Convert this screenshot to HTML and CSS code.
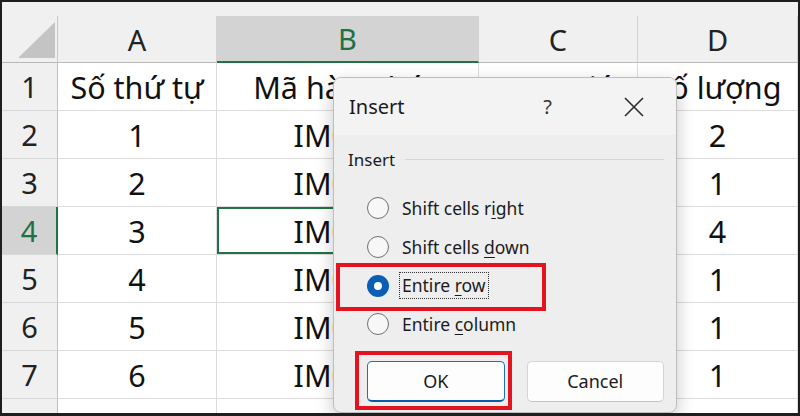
FILE: index.html
```html
<!DOCTYPE html>
<html lang="vi">
<head>
<meta charset="utf-8">
<link rel="stylesheet" href="styles.css">
</head>
<body>
<div class="frame">
  <div class="sheet">
    <div class="strip"></div>
    <div class="corner"><svg width="56" height="47" viewBox="0 0 56 47"><polygon points="53,6 53,42 16,42" fill="#c4c4c4"/></svg></div>
    <div class="colhead">A</div>
    <div class="colhead sel">B</div>
    <div class="colhead">C</div>
    <div class="colhead">D</div>

    <div class="rowhead">1</div><div class="cell">Số thứ tự</div><div class="cell">Mã hàng hóa</div><div class="cell">Đơn giá</div><div class="cell">Số lượng</div>
    <div class="rowhead">2</div><div class="cell">1</div><div class="cell">IM0001</div><div class="cell">150000</div><div class="cell">2</div>
    <div class="rowhead">3</div><div class="cell">2</div><div class="cell">IM0002</div><div class="cell">200000</div><div class="cell">1</div>
    <div class="rowhead sel">4</div><div class="cell">3</div><div class="cell active">IM0003</div><div class="cell">120000</div><div class="cell">4</div>
    <div class="rowhead">5</div><div class="cell">4</div><div class="cell">IM0004</div><div class="cell">300000</div><div class="cell">1</div>
    <div class="rowhead">6</div><div class="cell">5</div><div class="cell">IM0005</div><div class="cell">250000</div><div class="cell">1</div>
    <div class="rowhead">7</div><div class="cell">6</div><div class="cell">IM0006</div><div class="cell">180000</div><div class="cell">1</div>
    <div class="rowhead">8</div><div class="cell">7</div><div class="cell">IM0007</div><div class="cell">90000</div><div class="cell">3</div>
  </div>

  <div class="dialog">
    <div class="titlebar">
      <span class="title">Insert</span>
      <span class="help">?</span>
      <svg class="close" width="20" height="20" viewBox="0 0 20 20"><path d="M1 1 L19 19 M19 1 L1 19" stroke="#2b2b2b" stroke-width="1.6" fill="none"/></svg>
    </div>
    <div class="body">
      <div class="legend"><span>Insert</span><span class="rule"></span></div>
      <div class="options">
        <div class="opt"><span class="radio"></span><span class="lbl">Shift cells r<u>i</u>ght</span></div>
        <div class="opt"><span class="radio"></span><span class="lbl">Shift cells <u>d</u>own</span></div>
        <div class="opt"><span class="radio on"></span><span class="lbl focus">Entire <u>r</u>ow</span></div>
        <div class="opt"><span class="radio"></span><span class="lbl">Entire <u>c</u>olumn</span></div>
      </div>
      <div class="buttons">
        <div class="btn primary">OK</div>
        <div class="btn">Cancel</div>
      </div>
    </div>
  </div>

  <div class="mark mark-row"></div>
  <div class="mark mark-ok"></div>
</div>
</body>
</html>
```
FILE: styles.css
```css
* { box-sizing: border-box; }
html, body { margin: 0; padding: 0; background: #fff; }
body { font-family: "Noto Sans", "Open Sans", sans-serif; }

.frame {
  position: relative;
  width: 800px;
  height: 416px;
  border: 2px solid #1e1e1e;
  border-bottom-width: 3px;
  overflow: hidden;
  background: #fff;
}

.sheet {
  display: grid;
  grid-template-columns: 56px 159px 262px 159px 1fr;
  grid-template-rows: 14px 47px repeat(8, 48px);
  font-size: 30.5px;
  color: #111;
}

.strip { grid-column: 1 / -1; background: #f0f0f0; }

.corner {
  background: #f0f0f0;
  border-right: 1px solid #c8c8c8;
  border-bottom: 1px solid #b9b9b9;
}
.corner svg { display: block; }

.colhead {
  display: flex;
  align-items: center;
  justify-content: center;
  background: #f0f0f0;
  border-right: 1px solid #d2d2d2;
  border-bottom: 1px solid #b9b9b9;
  color: #222;
  font-size: 29px;
}
.colhead.sel {
  background: #d3d3d3;
  color: #1e7145;
  border-bottom: 2px solid #217346;
}

.rowhead {
  display: flex;
  align-items: center;
  justify-content: center;
  background: #f0f0f0;
  border-right: 1px solid #c0c0c0;
  border-bottom: 1px solid #d8d8d8;
  color: #222;
  font-size: 29px;
}
.rowhead.sel {
  background: #d3d3d3;
  color: #1e7145;
  border-right: 2px solid #217346;
}

.cell {
  display: flex;
  align-items: center;
  justify-content: center;
  white-space: nowrap;
  overflow: hidden;
  border-right: 1px solid #dcdcdc;
  border-bottom: 1px solid #dcdcdc;
}
.cell.active { box-shadow: inset 0 0 0 2px #217346; }

.dialog {
  position: absolute;
  left: 331px;
  top: 75px;
  width: 344px;
  height: 336px;
  border: 1px solid #bdbdbd;
  border-radius: 8px;
  background: #eeeeee;
  box-shadow: 0 6px 18px rgba(0, 0, 0, 0.22);
  overflow: hidden;
  color: #1b1b1b;
}

.titlebar {
  display: flex;
  align-items: center;
  height: 57px;
  padding-left: 15px;
  background: #f3f3f3;
}
.title { flex: 1; font-size: 20px; }
.help { font-size: 20px; color: #333; }
.close { margin-left: 72px; margin-right: 32px; }

.body { padding: 13px 12px 0 14px; }

.legend {
  display: flex;
  align-items: center;
  height: 22px;
  font-size: 17px;
}
.legend .rule { flex: 1; height: 1px; background: #d6d6d6; margin-left: 10px; }

.options { margin-top: 19px; padding-left: 19px; }
.opt {
  display: flex;
  align-items: center;
  height: 38.7px;
  font-size: 17.5px;
}
.radio {
  width: 22px;
  height: 22px;
  border: 1px solid #707070;
  border-radius: 50%;
  background: #f7f7f7;
  margin-right: 13px;
  flex: none;
}
.radio.on {
  border: 7px solid #0a5fb4;
  background: #fff;
}
.lbl u { text-decoration-thickness: 1px; text-underline-offset: 3px; }
.lbl.focus {
  border: 1px dotted #333;
  padding: 0 2px;
  margin-left: -3px;
  line-height: 25px;
}

.buttons {
  display: flex;
  gap: 22px;
  margin-top: 17px;
  padding-left: 19px;
}
.btn {
  width: 138px;
  height: 41px;
  display: flex;
  align-items: center;
  justify-content: center;
  background: #fdfdfd;
  border: 1px solid #d4d4d4;
  border-bottom-color: #c2c2c2;
  border-radius: 5px;
  font-size: 18px;
}
.btn.primary { border: 1px solid #1a6fc4; border-bottom: 2px solid #0b5aa8; }

.mark {
  position: absolute;
  border: 4px solid #e3141f;
}
.mark-row { left: 334px; top: 261px; width: 210px; height: 48px; }
.mark-ok { left: 353px; top: 349px; width: 157px; height: 59px; }
```
